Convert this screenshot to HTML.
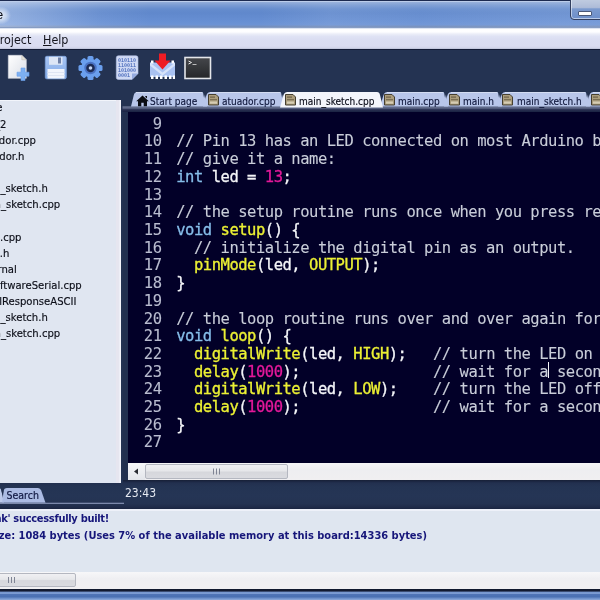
<!DOCTYPE html>
<html><head><meta charset="utf-8"><title>IDE</title>
<style>
html,body{margin:0;padding:0;}
body{width:600px;height:600px;overflow:hidden;position:relative;background:#243352;font-family:"DejaVu Sans Condensed","DejaVu Sans","Liberation Sans",sans-serif;}
.abs{position:absolute;}
#title{left:0;top:0;width:600px;height:29px;background:linear-gradient(#1c2a50 0,#1c2a50 1px,#bccdea 1.2px,#bccdea 2px,#8faad8 2.500px,#7b9cd3 5px,#658ccd 9px,#6088cc 13px,#678fd3 21px,#6d93d4 25px,#7590c0 26px,#728cb8 27.200px,#a9b9d6 28px,#e6ecf8 28.600px,#f6f8fd 29px);}
#titleglow{left:0;top:2px;width:600px;height:24.500px;background:radial-gradient(ellipse 10px 9px at 1px 13.500px,rgba(240,245,252,.85) 0,rgba(240,245,252,.55) 50%,rgba(235,242,252,0) 100%),linear-gradient(90deg,rgba(225,235,250,.40) 0,rgba(225,235,250,.27) 40px,rgba(225,235,250,.08) 100px,rgba(225,235,250,0) 150px,rgba(225,235,250,0) 260px,rgba(225,235,250,.10) 330px,rgba(225,235,250,.05) 420px,rgba(225,235,250,.12) 560px);}
#minbtn{left:569.500px;top:-3px;width:40px;height:21px;border:1px solid #323f60;border-radius:0 0 0 4px;background:linear-gradient(#c4cfe2 0,#aebcd8 45%,#7c9ace 52%,#6d8fca 100%);box-shadow:inset 0 0 0 1px rgba(235,242,252,.6);}
#minglyph{left:577.500px;top:11px;width:14px;height:5px;background:#ffffff;border:1px solid #4a5878;box-sizing:border-box;border-radius:1px;}
#menu{left:0;top:29px;width:600px;height:20px;background:linear-gradient(#ffffff 0,#fdfdff 3px,#ebedf8 5px,#dfe2f4 7.500px,#dbdef2 10px,#dadcf1 17px,#d2d5e9 19px,#b4bad2 20px);}
#menu span{position:absolute;top:2.600px;font-size:12.400px;color:#14141c;font-family:"DejaVu Sans Condensed","Liberation Sans",sans-serif;}
#toolbar{left:0;top:49px;width:600px;height:49px;background:#243352;border-top:1px solid #131b36;box-sizing:border-box;}
#left{left:0;top:99.500px;width:121px;height:383.500px;background:#e0e6f1;box-shadow:inset -1.500px 0 0 #f4f5fb, inset -5px 0 0 #e6e6f0, inset 0 1px 0 #f2f5fb;}
#left div{position:absolute;margin-top:.5px;font-size:11.200px;color:#0c0e18;-webkit-text-stroke:.15px #0c0e18;white-space:nowrap;line-height:16px;height:16px;}
#frame{left:122.500px;top:108px;width:478px;height:374px;background:#22304f;}
#editor{left:127.800px;top:111.600px;width:472.200px;height:351.400px;background:#020028;}
#hscroll{left:127.500px;top:462.700px;width:472.500px;height:17px;background:linear-gradient(#f6f6f8,#eeeef1 40%,#f0eff1);}
#status{left:0;top:482.700px;width:600px;height:26.300px;background:linear-gradient(#22304f 0,#243453 15%,#253555 50%,#243352 80%,#1f2b49 93%,#1a2541 100%);}
#out{left:0;top:509px;width:600px;height:64px;background:#dfe6f0;box-shadow:inset 0 2px 0 #eef1f9;}
#out div{position:absolute;font-weight:bold;font-size:11px;color:#16167a;white-space:nowrap;}
#bscroll{left:0;top:572.300px;width:600px;height:16.500px;background:linear-gradient(#f7f7f9,#efeff2 40%,#f1f0f2);}
#bottom{left:0;top:588.700px;width:600px;height:11.300px;background:linear-gradient(#10182c 0,#131b33 2.300px,#7596cf 2.800px,#7b9bd2 4.500px,#4f74b6 5.500px,#4a70b2 8px,#6a8dc9 9px,#7b9bd2 10.300px,#b4c6e2 11.300px);}
pre{-webkit-text-stroke:.3px;margin:0;font-family:"DejaVu Sans Mono","Liberation Mono",monospace;font-size:15.5px;letter-spacing:-0.48px;line-height:17.7px;color:#f4f5f8;}
.c{color:#c9cdd9;-webkit-text-stroke:.1px}.k{color:#86bde9}.f{color:#ecf034}.n{color:#e4189a}.ln{-webkit-text-stroke:.1px;color:#b9bccf;position:relative;left:3px}
.sbthumb{box-sizing:border-box;border:1px solid #b4b7c0;border-radius:2px;background:linear-gradient(#f0f0f3 0,#e6e7ea 45%,#d6d7dc 55%,#dadbe0 100%);}
.tl{-webkit-text-stroke:.15px;top:94.800px;font-size:10px;line-height:13px;white-space:nowrap;}
</style></head><body>
<div id="root" style="position:absolute;left:0;top:0;width:600px;height:600px;will-change:transform;">
<div id="title" class="abs"></div>
<div id="titleglow" class="abs"></div>
<div id="minbtn" class="abs"></div><div id="minglyph" class="abs"></div>
<div class="abs" style="left:-4.300px;top:7.100px;font-size:13.500px;color:#0c0f18;font-family:'Liberation Sans',sans-serif;">e</div>
<div id="menu" class="abs"><span style="left:-6.800px;">Project</span><span style="left:43px;"><u>H</u>elp</span></div>
<div id="toolbar" class="abs"></div>
<svg class="abs" style="left:0;top:49px" width="600" height="49" viewBox="0 49 600 49">
<defs>
<linearGradient id="gpage" x1="0" y1="0" x2="1" y2="1"><stop offset="0" stop-color="#ffffff"/><stop offset="1" stop-color="#d9dde6"/></linearGradient>
<linearGradient id="gfl" x1="0" y1="0" x2="0" y2="1"><stop offset="0" stop-color="#a9c5f3"/><stop offset="1" stop-color="#82abe8"/></linearGradient>
<linearGradient id="gterm" x1="0" y1="0" x2="0" y2="1"><stop offset="0" stop-color="#45474b"/><stop offset="1" stop-color="#252629"/></linearGradient>
</defs>
<!-- new file -->
<path d="M8.300 55.300h13.500l4.500 4.500v18.500h-18z" fill="url(#gpage)" stroke="#d9dce4" stroke-width=".6"/>
<path d="M21.800 55.300v4.500h4.500z" fill="#e6e2d8" stroke="#bdb8ae" stroke-width=".5"/>
<path d="M21 68h4v4.200h4v4h-4v4.300h-4v-4.300h-4v-4h4z" fill="#7db0f2" stroke="#6a9fea" stroke-width=".6"/>
<!-- save -->
<rect x="45.300" y="56.300" width="21" height="22.500" rx="1.500" fill="url(#gfl)" stroke="#7fa3de" stroke-width=".8"/>
<rect x="49" y="56.800" width="13.500" height="8" fill="#dde6f6"/>
<rect x="58" y="57.500" width="3" height="6" fill="#6d7fa6"/>
<rect x="47.500" y="69" width="17" height="9.500" fill="#f2f5fc"/>
<rect x="47.500" y="72" width="17" height="1" fill="#dfe5f3"/>
<rect x="47.500" y="75" width="17" height="1" fill="#dfe5f3"/>
<!-- gear -->
<g transform="translate(90.500 68)">
<g fill="#6a9fee">
<rect x="-3" y="-12" width="6" height="24" rx="1.500"/>
<rect x="-3" y="-12" width="6" height="24" rx="1.500" transform="rotate(45)"/>
<rect x="-3" y="-12" width="6" height="24" rx="1.500" transform="rotate(90)"/>
<rect x="-3" y="-12" width="6" height="24" rx="1.500" transform="rotate(135)"/>
<circle r="9.300"/>
</g>
<circle r="6.200" fill="#4a72c4"/><circle r="4.300" fill="#1d2a52"/>
<circle r="1.800" fill="#c8d8f4"/>
</g>
<!-- binary doc -->
<path d="M118.300 55.800h17.700q2 0 2 2v15.700l-6 6h-13.700q-2 0 -2 -2v-19.700q0 -2 2 -2z" fill="#cfd9f4" stroke="#b4c3ea" stroke-width=".6"/>
<path d="M138 73.500h-6v6z" fill="#93a9de"/>
<g font-family="'DejaVu Sans Mono','Liberation Mono',monospace" font-size="5" fill="#5574c0" font-weight="bold">
<text x="118" y="62">010110</text>
<text x="118" y="67">110011</text>
<text x="118" y="72">101000</text>
<text x="118" y="77">0001</text>
</g>
<!-- chip with arrow -->
<rect x="150" y="62.500" width="25" height="14.500" fill="#a9c2f2"/>
<path d="M150 62.500l12.500 10 12.500-10v3l-12.500 10-12.500-10z" fill="#d5e2fa"/>
<g fill="#ffffff">
<rect x="151" y="75.500" width="2.500" height="3.500"/><rect x="155.500" y="75.500" width="2.500" height="3.500"/><rect x="160" y="75.500" width="2.500" height="3.500"/><rect x="164.500" y="75.500" width="2.500" height="3.500"/><rect x="169" y="75.500" width="2.500" height="3.500"/><rect x="172.800" y="75.500" width="2.200" height="3.500"/>
<rect x="151" y="60.500" width="2.500" height="3"/><rect x="171.500" y="60.500" width="2.500" height="3"/>
</g>
<path d="M159 53.500h7v7h4.500l-8 9-8-9h4.500z" fill="#ee1c24"/>
<!-- terminal -->
<rect x="185" y="57.500" width="25.500" height="21" fill="url(#gterm)" stroke="#e4e6ea" stroke-width="1.600"/>
<path d="M188.500 61l3 1.500-3 1.500" fill="none" stroke="#e8e8e8" stroke-width="1"/>
<rect x="192.500" y="64" width="4" height="1" fill="#bbb"/>
</svg>

<div id="left" class="abs">
<div style="top:0px;right:118.500px">Source</div>
<div style="top:17px;right:114.5px">tiny2313_2</div>
<div style="top:33px;right:85.0px">atuador.cpp</div>
<div style="top:49px;right:96.5px">atuador.h</div>
<div style="top:81px;right:73.2px">main_sketch.h</div>
<div style="top:97px;right:60.8px">main_sketch.cpp</div>
<div style="top:130px;right:99.5px">main.cpp</div>
<div style="top:146px;right:111.7px">main.h</div>
<div style="top:162px;right:104.2px">External</div>
<div style="top:178px;right:39.3px">SoftwareSerial.cpp</div>
<div style="top:194px;right:44.5px">SerialResponseASCII</div>
<div style="top:210px;right:73.2px">main_sketch.h</div>
<div style="top:226px;right:60.8px">main_sketch.cpp</div>
</div>
<div id="frame" class="abs"></div>
<svg class="abs" style="left:0;top:88px" width="600" height="24" viewBox="0 88 600 24">
<defs><linearGradient id="gstrip" x1="0" y1="0" x2="0" y2="1"><stop offset="0" stop-color="#6a7493"/><stop offset=".35" stop-color="#5a6484"/><stop offset=".6" stop-color="#2a3254"/><stop offset="1" stop-color="#1a2142"/></linearGradient></defs>
<rect x="122.500" y="106.300" width="478" height="5.500" fill="url(#gstrip)"/>
<path d="M131 106.500 L133.800 95 Q134.500 92 137.500 92 L202 92 Q204.5 92 205 95 L207 106.500z" fill="#b8c6ea"/>
<path d="M136 92.500 L202 92.500" stroke="#d3dcf2" stroke-width="1"/>
<path d="M203 106.500 L206.5 95 Q207.5 92 210.5 92 L280 92 Q282.5 92 283 95 L285 106.500z" fill="#b8c6ea"/>
<path d="M210 92.500 L280 92.500" stroke="#d3dcf2" stroke-width="1"/>
<path d="M380 106.500 L383.5 95 Q384.5 92 387.5 92 L443 92 Q445.5 92 446 95 L448 106.500z" fill="#b8c6ea"/>
<path d="M387 92.500 L443 92.500" stroke="#d3dcf2" stroke-width="1"/>
<path d="M444 106.500 L447.5 95 Q448.5 92 451.5 92 L497 92 Q499.5 92 500 95 L502 106.500z" fill="#b8c6ea"/>
<path d="M451 92.500 L497 92.500" stroke="#d3dcf2" stroke-width="1"/>
<path d="M498 106.500 L501.5 95 Q502.5 92 505.5 92 L585 92 Q587.5 92 588 95 L590 106.500z" fill="#b8c6ea"/>
<path d="M505 92.500 L585 92.500" stroke="#d3dcf2" stroke-width="1"/>
<path d="M586 106.500 L589.5 95 Q590.5 92 593.5 92 L659 92 Q661.5 92 662 95 L664 106.500z" fill="#b8c6ea"/>
<path d="M593 92.500 L659 92.500" stroke="#d3dcf2" stroke-width="1"/>
<path d="M202.8 91.500 L204.1 98 L205.7 91.500z" fill="#243352"/>
<path d="M280.8 91.500 L282.1 98 L283.7 91.500z" fill="#243352"/>
<path d="M379.8 91.500 L381.1 98 L382.7 91.500z" fill="#243352"/>
<path d="M443.8 91.500 L445.1 98 L446.7 91.500z" fill="#243352"/>
<path d="M497.8 91.500 L499.1 98 L500.7 91.500z" fill="#243352"/>
<path d="M585.8 91.500 L587.1 98 L588.7 91.500z" fill="#243352"/>
<path d="M280 107.500 L283.5 95 Q284.5 92 287.5 92 L377 92 Q379.5 92 380 95 L383 107.500z" fill="#f3f5fb"/>
<path d="M142.500 95.500l-6.300 5.700h1.800v5h3.300v-3.400h2.400v3.400h3.300v-5h1.800z M145.300 96h1.700v2.500l-1.700-1.500z" fill="#0b0d14"/>
<g transform="translate(208 94)"><path d="M.5.500h7.500l2.500 2.500v8h-10z" fill="#ab9d7c" stroke="#453f30" stroke-width="1"/><rect x="2" y="2.500" width="5" height="1.200" fill="#6e6148"/><rect x="2" y="5" width="7" height="1.200" fill="#7b6f54"/><rect x="2" y="7.500" width="7" height="2.200" fill="#d6cdb4"/></g>
<g transform="translate(285 94)"><path d="M.5.500h7.500l2.500 2.500v8h-10z" fill="#ab9d7c" stroke="#453f30" stroke-width="1"/><rect x="2" y="2.500" width="5" height="1.200" fill="#6e6148"/><rect x="2" y="5" width="7" height="1.200" fill="#7b6f54"/><rect x="2" y="7.500" width="7" height="2.200" fill="#d6cdb4"/></g>
<g transform="translate(384 94)"><path d="M.5.500h7.500l2.500 2.500v8h-10z" fill="#ab9d7c" stroke="#453f30" stroke-width="1"/><rect x="2" y="2.500" width="5" height="1.200" fill="#6e6148"/><rect x="2" y="5" width="7" height="1.200" fill="#7b6f54"/><rect x="2" y="7.500" width="7" height="2.200" fill="#d6cdb4"/></g>
<g transform="translate(449 94)"><path d="M.5.500h7.500l2.500 2.500v8h-10z" fill="#ab9d7c" stroke="#453f30" stroke-width="1"/><rect x="2" y="2.500" width="5" height="1.200" fill="#6e6148"/><rect x="2" y="5" width="7" height="1.200" fill="#7b6f54"/><rect x="2" y="7.500" width="7" height="2.200" fill="#d6cdb4"/></g>
<g transform="translate(502 94)"><path d="M.5.500h7.500l2.500 2.500v8h-10z" fill="#ab9d7c" stroke="#453f30" stroke-width="1"/><rect x="2" y="2.500" width="5" height="1.200" fill="#6e6148"/><rect x="2" y="5" width="7" height="1.200" fill="#7b6f54"/><rect x="2" y="7.500" width="7" height="2.200" fill="#d6cdb4"/></g>
<g transform="translate(591 94)"><path d="M.5.500h7.500l2.500 2.500v8h-10z" fill="#ab9d7c" stroke="#453f30" stroke-width="1"/><rect x="2" y="2.500" width="5" height="1.200" fill="#6e6148"/><rect x="2" y="5" width="7" height="1.200" fill="#7b6f54"/><rect x="2" y="7.500" width="7" height="2.200" fill="#d6cdb4"/></g>
</svg>
<div class="abs tl" style="left:150px;color:#10183c">Start page</div>
<div class="abs tl" style="left:222px;color:#10183c">atuador.cpp</div>
<div class="abs tl" style="left:299px;color:#0a0c18">main_sketch.cpp</div>
<div class="abs tl" style="left:398px;color:#10183c">main.cpp</div>
<div class="abs tl" style="left:463px;color:#10183c">main.h</div>
<div class="abs tl" style="left:517px;color:#10183c">main_sketch.h</div>

<div id="editor" class="abs"><pre class="abs" style="left:4.200px;top:4.200px;"><span class="ln">  9</span>
<span class="ln"> 10</span>  <span class="c">// Pin 13 has an LED connected on most Arduino boards.</span>
<span class="ln"> 11</span>  <span class="c">// give it a name:</span>
<span class="ln"> 12</span>  <span class="k">int</span> led = <span class="n">13</span>;
<span class="ln"> 13</span>
<span class="ln"> 14</span>  <span class="c">// the setup routine runs once when you press reset:</span>
<span class="ln"> 15</span>  <span class="k">void</span> <span class="f">setup</span>() {
<span class="ln"> 16</span>    <span class="c">// initialize the digital pin as an output.</span>
<span class="ln"> 17</span>    <span class="f">pinMode</span>(led, <span class="f">OUTPUT</span>);
<span class="ln"> 18</span>  }
<span class="ln"> 19</span>
<span class="ln"> 20</span>  <span class="c">// the loop routine runs over and over again forever:</span>
<span class="ln"> 21</span>  <span class="k">void</span> <span class="f">loop</span>() {
<span class="ln"> 22</span>    <span class="f">digitalWrite</span>(led, <span class="f">HIGH</span>);   <span class="c">// turn the LED on (HIGH is the voltage level)</span>
<span class="ln"> 23</span>    <span class="f">delay</span>(<span class="n">1000</span>);               <span class="c">// wait for a second</span>
<span class="ln"> 24</span>    <span class="f">digitalWrite</span>(led, <span class="f">LOW</span>);    <span class="c">// turn the LED off by making the voltage LOW</span>
<span class="ln"> 25</span>    <span class="f">delay</span>(<span class="n">1000</span>);               <span class="c">// wait for a second</span>
<span class="ln"> 26</span>  }
<span class="ln"> 27</span></pre></div>
<div class="abs" style="left:547.500px;top:362px;width:1.500px;height:15.500px;background:#f4f4f8;"></div>
<div id="hscroll" class="abs">
<div class="abs" style="left:0;top:0;width:17px;height:17px;background:linear-gradient(#f6f7f9,#e3e5ea);"></div>
<svg class="abs" style="left:0;top:0" width="17" height="17"><path d="M10 5.500v6l-4-3z" fill="#2a2c33"/></svg>
<div class="abs sbthumb" style="left:17.500px;top:1px;width:143px;height:15px;"></div>
<svg class="abs" style="left:84px;top:4px" width="12" height="9"><path d="M1.500 1.500v6M4.500 1.500v6M7.500 1.500v6" stroke="#7f8494" stroke-width="1"/></svg>
</div>
<div class="abs" style="left:122.500px;top:479.700px;width:478px;height:3px;background:linear-gradient(#172036,#1c2743 50%,#22304f);"></div>
<div id="status" class="abs">
<svg class="abs" style="left:0;top:0" width="130" height="26">
<path d="M-6 19.700 L-6 5 L-1 5 Q.6 5 1.200 7 L4 19.700z" fill="#bcc9ea"/>
<path d="M2.200 19.700 L3.600 8 Q4 5 7 5 L38 5 Q40.300 5 41.200 7.500 L45.500 19.700z" fill="#abbbe3"/>
<path d="M.8 5 L2.700 12.500 L4 5z" fill="#243352"/>
<rect x="0" y="19.700" width="124" height="1.300" fill="#7c89ab"/>
</svg>
<div class="abs" style="left:6.500px;top:6.300px;font-size:10.500px;line-height:13px;color:#121a44;-webkit-text-stroke:.2px;">Search</div>
</div>
<div class="abs" style="left:125px;top:486px;font-size:12px;color:#e6eaf2;">23:43</div>
<div id="out" class="abs">
<div style="top:3px;right:491px;letter-spacing:-.3px">Project 'blink' successfully built!</div>
<div style="top:20px;right:173px">Program size: 1084 bytes (Uses 7% of the available memory at this board:14336 bytes)</div>
</div>
<div id="bscroll" class="abs">
<div class="abs sbthumb" style="left:-4px;top:.5px;width:79.500px;height:14.500px;"></div>
<svg class="abs" style="left:7px;top:4px" width="12" height="9"><path d="M1.500 1v6M4.500 1v6M7.500 1v6" stroke="#7f8494" stroke-width="1"/></svg>
</div>
<div id="bottom" class="abs"></div>
</div>
</body></html>
